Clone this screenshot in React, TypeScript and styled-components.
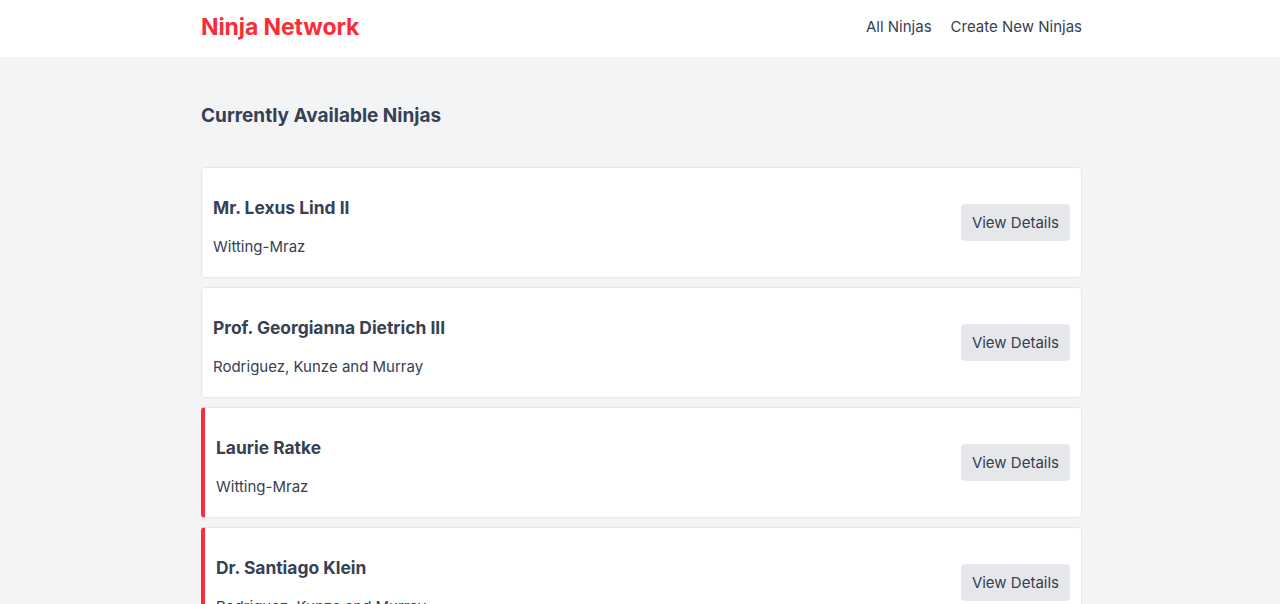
import styled, { createGlobalStyle } from "styled-components";

type Ninja = {
   id: number;
   name: string;
   company: string;
   featured: boolean;
};

const ninjas: Ninja[] = [
   { id: 1, name: "Mr. Lexus Lind II", company: "Witting-Mraz", featured: false },
   { id: 2, name: "Prof. Georgianna Dietrich III", company: "Rodriguez, Kunze and Murray", featured: false },
   { id: 3, name: "Laurie Ratke", company: "Witting-Mraz", featured: true },
   { id: 4, name: "Dr. Santiago Klein", company: "Rodriguez, Kunze and Murray", featured: true },
];

const colors = {
   red: "#fb2c36",
   text: "#364153",
   page: "#f3f4f6",
   border: "#e5e7eb",
   button: "#e5e7eb",
};

const GlobalStyle = createGlobalStyle`
   html, body {
      margin: 0;
      padding: 0;
      overflow: hidden;
   }
   body {
      background: ${colors.page};
      font-family: Inter, "Noto Sans", sans-serif;
      color: ${colors.text};
   }
   * {
      box-sizing: border-box;
   }
`;

const NavBar = styled.header`
   background: #fff;
   height: 57px;
`;

const Inner = styled.div`
   width: 881px;
   margin-left: calc(50% - 439px);
`;

const NavInner = styled(Inner)`
   height: 100%;
   display: flex;
   align-items: center;
   justify-content: space-between;
   padding-bottom: 4px;
`;

const Logo = styled.h1`
   margin: 0;
   font-size: 23px;
   font-weight: 700;
   color: ${colors.red};
   letter-spacing: -0.1px;
`;

const Links = styled.nav`
   display: flex;
   gap: 19px;
   a {
      color: ${colors.text};
      text-decoration: none;
      font-size: 15px;
   }
`;

const Main = styled(Inner)`
   padding-top: 45px;
`;

const Title = styled.h2`
   margin: 0 0 37px;
   font-size: 19px;
   line-height: 28px;
   font-weight: 700;
`;

const List = styled.div`
   display: flex;
   flex-direction: column;
   gap: 9px;
`;

const Card = styled.div<{ $featured: boolean }>`
   display: flex;
   align-items: center;
   justify-content: space-between;
   background: #fff;
   border: 1px solid ${colors.border};
   border-left: ${(p) => (p.$featured ? `4px solid ${colors.red}` : `1px solid ${colors.border}`)};
   border-radius: 4px;
   padding: 28px 11px 18px 11px;
`;

const Name = styled.h3`
   margin: 0 0 15px;
   font-size: 17.4px;
   line-height: 24px;
   font-weight: 700;
`;

const Company = styled.p`
   margin: 0;
   font-size: 15px;
   line-height: 24px;
`;

const DetailsButton = styled.button`
   margin-top: -10px;
   background: ${colors.button};
   border: none;
   border-radius: 4px;
   height: 37px;
   padding: 0 11px;
   font-family: inherit;
   font-size: 15px;
   color: ${colors.text};
   cursor: pointer;
`;

export default function App() {
   return (
      <>
         <GlobalStyle />
         <NavBar>
            <NavInner>
               <Logo>Ninja Network</Logo>
               <Links>
                  <a href="#">All Ninjas</a>
                  <a href="#">Create New Ninjas</a>
               </Links>
            </NavInner>
         </NavBar>
         <Main>
            <Title>Currently Available Ninjas</Title>
            <List>
               {ninjas.map((ninja) => (
                  <Card key={ninja.id} $featured={ninja.featured}>
                     <div>
                        <Name>{ninja.name}</Name>
                        <Company>{ninja.company}</Company>
                     </div>
                     <DetailsButton>View Details</DetailsButton>
                  </Card>
               ))}
            </List>
         </Main>
      </>
   );
}
